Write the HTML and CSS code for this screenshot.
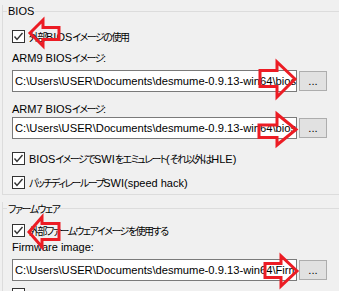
FILE: index.html
```html
<!DOCTYPE html>
<html lang="ja">
<head>
<meta charset="utf-8">
<link rel="stylesheet" href="styles.css">
</head>
<body>
<div class="page">
  <div class="group">
    <div class="group-head"><span class="group-title">BIOS</span></div>
    <div class="row cb-row r1">
      <span class="cb"><svg viewBox="0 0 13 13" width="13" height="13"><rect x="0.5" y="0.5" width="12" height="12" fill="#fff" stroke="#333"/><path d="M2.5 6.5 L5 9.5 L10.5 3" fill="none" stroke="#333" stroke-width="1.4"/></svg></span>
      <span class="lbl"><span class="jp">外部</span>BIOS<span class="jp">イメージの使用</span></span>
    </div>
    <div class="row text-row r2">ARM9 BIOS<span class="jp">イメージ</span>:</div>
    <div class="row path-row r3">
      <div class="path">C:\Users\USER\Documents\desmume-0.9.13-win64\bios</div>
      <button class="browse">...</button>
    </div>
    <div class="row text-row r4">ARM7 BIOS<span class="jp">イメージ</span>:</div>
    <div class="row path-row r5">
      <div class="path">C:\Users\USER\Documents\desmume-0.9.13-win64\bios</div>
      <button class="browse">...</button>
    </div>
    <div class="row cb-row r6">
      <span class="cb"><svg viewBox="0 0 13 13" width="13" height="13"><rect x="0.5" y="0.5" width="12" height="12" fill="#fff" stroke="#333"/><path d="M2.5 6.5 L5 9.5 L10.5 3" fill="none" stroke="#333" stroke-width="1.4"/></svg></span>
      <span class="lbl">BIOS<span class="jp">イメージで</span>SWI<span class="jp">をエミュレート</span>(<span class="jp">それ以外は</span>HLE)</span>
    </div>
    <div class="row cb-row r7">
      <span class="cb"><svg viewBox="0 0 13 13" width="13" height="13"><rect x="0.5" y="0.5" width="12" height="12" fill="#fff" stroke="#333"/><path d="M2.5 6.5 L5 9.5 L10.5 3" fill="none" stroke="#333" stroke-width="1.4"/></svg></span>
      <span class="lbl"><span class="jp">パッチディレーループ</span>SWI(speed hack)</span>
    </div>
  </div>

  <div class="group g2">
    <div class="group-head"><span class="group-title"><span class="jp">ファームウェア</span></span></div>
    <div class="row cb-row f1">
      <span class="cb"><svg viewBox="0 0 13 13" width="13" height="13"><rect x="0.5" y="0.5" width="12" height="12" fill="#fff" stroke="#333"/><path d="M2.5 6.5 L5 9.5 L10.5 3" fill="none" stroke="#333" stroke-width="1.4"/></svg></span>
      <span class="lbl"><span class="jp">外部ファームウェアイメージを使用する</span></span>
    </div>
    <div class="row text-row f2">Firmware image:</div>
    <div class="row path-row f3">
      <div class="path">C:\Users\USER\Documents\desmume-0.9.13-win64\Firmware.bin</div>
      <button class="browse">...</button>
    </div>
    <div class="row cb-row f4">
      <span class="cb"><svg viewBox="0 0 13 13" width="13" height="13"><rect x="0.5" y="0.5" width="12" height="12" fill="#fff" stroke="#333"/></svg></span>
    </div>
  </div>

  <svg class="marks" width="339" height="291" viewBox="0 0 339 291">
    <g fill="none" stroke="#ec1c24" stroke-width="3" stroke-linejoin="miter">
      <polygon points="30,33 43,20 43,27.5 59,27.5 59,39.5 43,39.5 43,46"/>
      <polygon points="295,79 277,62 277,70.5 260,70.5 260,86.5 277,86.5 277,97"/>
      <polygon points="296,129.5 277,114 277,125 259,125 259,137.5 277,137.5 277,145"/>
      <polygon points="29,232 42,217 42,223.5 59,223.5 59,239.5 42,239.5 42,247"/>
      <polygon points="297,271 281,256 281,263.5 265,263.5 265,277.5 281,277.5 281,286"/>
    </g>
  </svg>
</div>
</body>
</html>
```

FILE: styles.css
```css
html, body {
  margin: 0;
  padding: 0;
  background: #f0f0f0;
  overflow: hidden;
}
.page {
  position: relative;
  width: 339px;
  height: 291px;
  padding-top: 5px;
  box-sizing: border-box;
  font-family: "Liberation Sans", "Noto Sans CJK JP", sans-serif;
  font-size: 11px;
  color: #000;
  overflow: hidden;
}
.jp {
  font-family: "Noto Sans CJK JP", sans-serif;
  font-size: 10px;
  letter-spacing: -1.5px;
  font-feature-settings: "palt";
}
.group {
  margin-left: 2px;
  margin-right: -10px;
  border-left: 1px solid #dcdcdc;
  border-bottom: 1px solid #dcdcdc;
  padding: 0 0 2px 9px;
}
.g2 {
  margin-top: 7px;
  border-bottom: none;
}
.group-head {
  display: flex;
  align-items: center;
  height: 13px;
  margin-left: -9px;
}
.group-head::before {
  content: "";
  width: 4px;
  height: 1px;
  background: #dcdcdc;
}
.group-head::after {
  content: "";
  flex: 1;
  height: 1px;
  background: #dcdcdc;
}
.group-title {
  padding: 0 1px;
  line-height: 13px;
  white-space: nowrap;
}
.row {
  display: flex;
  align-items: center;
  white-space: nowrap;
}
.text-row { display: block; line-height: 14px; height: 14px; }
.cb-row { height: 19px; }
.path-row { height: 22px; gap: 2px; }
.cb { display: flex; width: 13px; height: 13px; }
.lbl { margin-left: 4px; }

.r1 { margin-top: 9px; }
.r2 { margin-top: 5px; }
.r3 { margin-top: 5px; }
.r4 { margin-top: 10px; }
.r5 { margin-top: 1px; }
.r6 { margin-top: 10px; }
.r7 { margin-top: 5px; }
.f1 { margin-top: 6px; }
.f2 { margin-top: 0; }
.f3 { margin-top: 5px; }
.f4 { margin-top: 4px; align-items: flex-start; padding-top: 3px; box-sizing: border-box; }

.path {
  width: 285px;
  height: 22px;
  box-sizing: border-box;
  border: 1px solid #7a7a7a;
  background: #fff;
  padding-left: 2px;
  font-size: 11.2px;
  line-height: 20px;
  overflow: hidden;
  white-space: nowrap;
}
.browse {
  width: 28px;
  height: 20px;
  margin: 0;
  padding: 0;
  border: 1px solid #adadad;
  background: #e1e1e1;
  font-family: "Liberation Sans", sans-serif;
  font-size: 11.2px;
  color: #000;
  line-height: 18px;
}
.marks {
  position: absolute;
  left: 0;
  top: 0;
  pointer-events: none;
}
```
